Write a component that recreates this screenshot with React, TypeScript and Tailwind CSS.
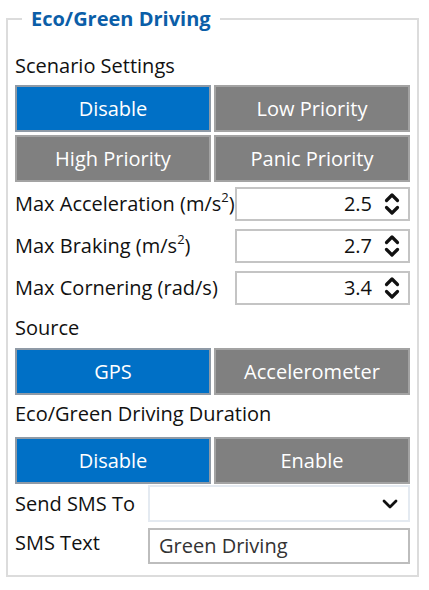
import React from 'react'

const font = { fontFamily: '"Open Sans", "Noto Sans", sans-serif' }

const Spinner = () => (
  <svg width="16" height="26" viewBox="0 0 16 26" className="shrink-0">
    <path d="M2.5 9.5 L8 4 L13.5 9.5" fill="none" stroke="#111" strokeWidth="3.2" strokeLinecap="round" strokeLinejoin="round" />
    <path d="M2.5 16.5 L8 22 L13.5 16.5" fill="none" stroke="#111" strokeWidth="3.2" strokeLinecap="round" strokeLinejoin="round" />
  </svg>
)

const Chevron = () => (
  <svg width="16" height="10" viewBox="0 0 16 10">
    <path d="M2 2 L8 8 L14 2" fill="none" stroke="#111" strokeWidth="2.8" strokeLinecap="round" strokeLinejoin="round" />
  </svg>
)

const Toggle = ({ left, right, active = 0 }: { left: string; right: string; active?: number }) => (
  <div className="grid grid-cols-2 gap-[3px]">
    {[left, right].map((t, i) => (
      <div
        key={t}
        className={
          'h-[47px] flex items-center justify-center text-white text-[20px] border-2 ' +
          (i === active ? 'bg-[#0070c6] border-[#8f9aa6]' : 'bg-[#808080] border-[#a3a3a3]')
        }
      >
        {t}
      </div>
    ))}
  </div>
)

const NumRow = ({ label, value }: { label: React.ReactNode; value: string }) => (
  <div className="flex items-center">
    <div className="w-[220px] text-[20px] text-[#111] whitespace-nowrap">{label}</div>
    <div className="flex-1 h-[34px] border-2 border-[#c4c4c4] bg-white flex items-center justify-end pr-[8px] gap-[12px]">
      <span className="text-[20px] text-[#111]">{value}</span>
      <Spinner />
    </div>
  </div>
)

const Sup = () => <sup className="text-[13px] -top-[0.7em]">2</sup>

export default function App() {
  return (
    <div className="bg-white w-[429px] h-[590px] pt-[7px] pl-[6px] pr-[10px]" style={font}>
      <fieldset className="border-2 border-[#dcdcdc] px-[7px] pb-[11px]">
        <legend className="ml-[7px] px-[9px] text-[20px] leading-[24px] font-bold text-[#0b5ea8]">
          Eco/Green Driving
        </legend>

        <div className="mt-[21px] text-[20px] leading-[28px] text-[#111]">Scenario Settings</div>
        <div className="mt-[5px] flex flex-col gap-[3px]">
          <Toggle left="Disable" right="Low Priority" />
          <Toggle left="High Priority" right="Panic Priority" active={-1} />
        </div>

        <div className="mt-[5px] flex flex-col gap-[8px]">
          <NumRow label={<>Max Acceleration (m/s<Sup />)</>} value="2.5" />
          <NumRow label={<>Max Braking (m/s<Sup />)</>} value="2.7" />
          <NumRow label="Max Cornering (rad/s)" value="3.4" />
        </div>

        <div className="mt-[9px] text-[20px] leading-[28px] text-[#111]">Source</div>
        <div className="mt-[6px]">
          <Toggle left="GPS" right="Accelerometer" />
        </div>

        <div className="mt-[5px] text-[20px] leading-[28px] text-[#111]">Eco/Green Driving Duration</div>
        <div className="mt-[9px]">
          <Toggle left="Disable" right="Enable" />
        </div>

        <div className="mt-[1px] flex items-center">
          <div className="w-[133px] text-[20px] text-[#111]">Send SMS To</div>
          <div className="flex-1 h-[37px] border-2 border-[#e4eaf1] bg-white flex items-center justify-end pr-[10px]">
            <Chevron />
          </div>
        </div>

        <div className="mt-[6px] flex items-center">
          <div className="w-[133px] text-[20px] text-[#111] -mt-[6px]">SMS Text</div>
          <div className="flex-1 h-[36px] border-2 border-[#bdbdbd] bg-white flex items-center pl-[9px] text-[20px] text-[#333]">
            Green Driving
          </div>
        </div>
      </fieldset>
    </div>
  )
}
